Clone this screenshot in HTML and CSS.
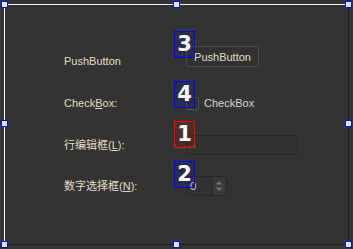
FILE: index.html
```html
<!DOCTYPE html>
<html lang="zh">
<head>
    <meta charset="UTF-8">
    <title>Form</title>
    <link rel="stylesheet" href="styles.css">
</head>
<body>

    <div class="form">
        <span class="handle tl"></span>
        <span class="handle tc"></span>
        <span class="handle tr"></span>
        <span class="handle ml"></span>
        <span class="handle mr"></span>
        <span class="handle bl"></span>
        <span class="handle bc"></span>
        <span class="handle br"></span>

        <div class="grid">
            <label class="lbl lbl-top">PushButton</label>
            <div class="field">
                <span class="badge">3</span>
                <button class="btn">PushButton</button>
            </div>

            <label class="lbl">Check<u>B</u>ox:</label>
            <div class="field check">
                <span class="badge">4</span>
                <span class="box"></span>
                <span class="check-text">CheckBox</span>
            </div>

            <label class="lbl">行编辑框(<u>L</u>):</label>
            <div class="field">
                <span class="badge red">1</span>
                <div class="line-edit"></div>
            </div>

            <label class="lbl">数字选择框(<u>N</u>):</label>
            <div class="field">
                <span class="badge">2</span>
                <div class="spin">
                    <span class="spin-val">0</span>
                    <span class="spin-btns">
                        <svg width="13" height="18" viewBox="0 0 13 18">
                            <polygon points="2.5,7.5 6,4 9.5,7.5" fill="#707070"/>
                            <polygon points="2.5,10.5 6,14 9.5,10.5" fill="#707070"/>
                        </svg>
                    </span>
                </div>
            </div>
        </div>
    </div>

</body>
</html>
```

FILE: styles.css
```css
body {
    margin: 0;
    width: 353px;
    height: 249px;
    overflow: hidden;
    background: #333;
    font-family: "Liberation Sans", "Noto Sans CJK SC", sans-serif;
    font-size: 11px;
    color: #e2ddc6;
}

.form {
    position: relative;
    margin: 4px;
    width: 345px;
    height: 241px;
    box-sizing: border-box;
    border-top: 1px solid #f2f2f2;
    border-left: 1px solid #f2f2f2;
    border-right: 1px solid #1e1e1e;
    border-bottom: 1px solid #1e1e1e;
    padding: 41px 0 0 59px;
}

/* selection handles */
.handle {
    position: absolute;
    z-index: 2;
    width: 7px;
    height: 7px;
    box-sizing: border-box;
    border: 1px solid #0000ff;
    background: #e6e6f2;
}

.tl { left: -4px; top: -4px; }
.tc { left: calc(50% - 3.5px); top: -4px; }
.tr { right: -4px; top: -4px; }
.ml { left: -4px; top: calc(50% - 4.5px); }
.mr { right: -4px; top: calc(50% - 4.5px); }
.bl { left: -4px; bottom: -4px; }
.bc { left: calc(50% - 3.5px); bottom: -4px; }
.br { right: -4px; bottom: -4px; }

.grid {
    display: grid;
    grid-template-columns: 122px auto;
    grid-template-rows: 25px 22px 20px 20px;
    row-gap: 21px;
    align-items: center;
    line-height: 13px;
}

.lbl u {
    text-underline-offset: 1px;
}

.lbl-top {
    align-self: start;
    margin-top: 9px;
}

.field {
    position: relative;
    align-self: start;
}

/* tab order badges */
.badge {
    position: absolute;
    z-index: 1;
    left: -12px;
    top: -15px;
    width: 21px;
    height: 27px;
    box-sizing: border-box;
    border: 1px solid #0000ff;
    background: rgba(0, 0, 255, 0.16);
    color: #fff;
    font-family: "DejaVu Sans", sans-serif;
    font-weight: bold;
    font-size: 21px;
    line-height: 25px;
    text-align: center;
}

.badge.red {
    top: -14px;
    border-color: #ff0000;
    background: rgba(255, 0, 0, 0.14);
}

.btn {
    display: block;
    width: 73px;
    height: 21px;
    box-sizing: border-box;
    padding: 1px 0 0;
    border: 1px solid #4b4b4b;
    border-radius: 3px;
    background: #313131;
    color: #e2ddc6;
    font: inherit;
    line-height: 17px;
}

.check {
    display: flex;
    align-items: flex-start;
    padding-top: 5px;
}

.check .badge {
    top: -11px;
}

.box {
    width: 13px;
    height: 13px;
    box-sizing: border-box;
    border: 1px solid #4e4e4e;
    border-radius: 2px;
    background: #2f2f2f;
}

.check-text {
    margin-left: 5px;
    color: #d6d6d2;
}

.line-edit {
    width: 112px;
    height: 20px;
    box-sizing: border-box;
    border: 1px solid #272727;
    border-radius: 3px;
    background: #323232;
}

.spin {
    display: flex;
    width: 41px;
    height: 20px;
    box-sizing: border-box;
    border: 1px solid #282828;
    border-radius: 3px;
    background: #323232;
    overflow: hidden;
}

.spin-val {
    padding-left: 3px;
    line-height: 18px;
    color: #e2ddc6;
}

.spin-btns {
    margin-left: auto;
    width: 13px;
    border-left: 1px solid #2a2a2a;
    background: #393939;
}

.spin-btns svg {
    display: block;
}
```
